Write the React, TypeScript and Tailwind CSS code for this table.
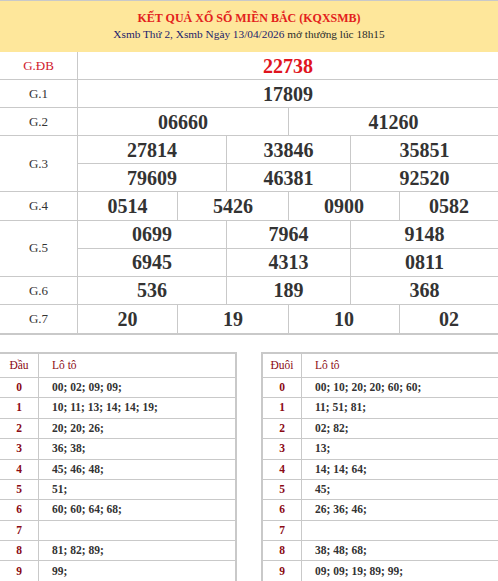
import React from "react";

const serif = { fontFamily: '"Liberation Serif", "Times New Roman", serif' };

const B = "border-[#c9c9c9]";

function Num({ v, red }: { v: string; red?: boolean }) {
  return (
    <span className={`text-[20px] font-bold leading-none ${red ? "text-[#e0141e]" : "text-[#333333]"}`}>{v}</span>
  );
}

function Cells({ vals, widths, red, last }: { vals: string[]; widths: string[]; red?: boolean; last?: boolean }) {
  return (
    <div className={`flex h-[28.1px] ${last ? "" : `border-b ${B}`}`}>
      {vals.map((v, i) => (
        <div
          key={i}
          className={`${widths[i]} ${i < vals.length - 1 ? `border-r ${B}` : ""} flex items-center justify-center`}
        >
          <Num v={v} red={red} />
        </div>
      ))}
    </div>
  );
}

const W1 = ["flex-1"];
const W2 = ["w-[211px]", "flex-1"];
const W3 = ["w-[149px]", "w-[124px]", "flex-1"];
const W4 = ["w-[100px]", "w-[111px]", "w-[111px]", "flex-1"];

function Row({ label, rows, widths, red, last }: { label: string; rows: string[][]; widths: string[]; red?: boolean; last?: boolean }) {
  return (
    <div className="flex">
      <div
        className={`w-[78px] shrink-0 border-r ${last ? "" : "border-b"} ${B} flex items-center justify-center text-[13px] ${red ? "text-[#d0202e]" : "text-[#333333]"}`}
      >
        {label}
      </div>
      <div className="flex-1 flex flex-col">
        {rows.map((r, i) => (
          <Cells key={i} vals={r} widths={widths} red={red} last={last && i === rows.length - 1} />
        ))}
      </div>
    </div>
  );
}

function LotoTable({ head, data, className }: { head: string; data: string[]; className: string }) {
  return (
    <div className={`w-[237px] border-t-2 ${B} ${className}`}>
      <div className={`flex h-[24px] border-b ${B}`}>
        <div className={`w-[39px] border-r ${B} flex items-center justify-center text-[11.5px] text-[#8b0a14]`}>{head}</div>
        <div className="flex-1 flex items-center pl-[13px] text-[11.5px] text-[#8b0a14]">Lô tô</div>
      </div>
      {data.map((d, i) => (
        <div key={i} className={`flex h-[20.4px] border-b ${B}`}>
          <div className={`w-[39px] border-r ${B} flex items-center justify-center text-[11.5px] font-bold text-[#8b0a14]`}>{i}</div>
          <div className="flex-1 flex items-center pl-[13px] text-[11.5px] font-bold text-[#333333]">{d}</div>
        </div>
      ))}
    </div>
  );
}

export default function App() {
  const dau = [
    "00; 02; 09; 09;",
    "10; 11; 13; 14; 14; 19;",
    "20; 20; 26;",
    "36; 38;",
    "45; 46; 48;",
    "51;",
    "60; 60; 64; 68;",
    "",
    "81; 82; 89;",
    "99;",
  ];
  const duoi = [
    "00; 10; 20; 20; 60; 60;",
    "11; 51; 81;",
    "02; 82;",
    "13;",
    "14; 14; 64;",
    "45;",
    "26; 36; 46;",
    "",
    "38; 48; 68;",
    "09; 09; 19; 89; 99;",
  ];
  return (
    <div className="w-[498px] h-[581px] overflow-hidden bg-white" style={serif}>
      <div className={`border-t ${B} bg-[#fee79b] h-[52px] flex flex-col items-center pt-[9px]`}>
        <div className="text-[12px] font-bold text-[#e3211b] leading-[16px]">KẾT QUẢ XỔ SỐ MIỀN BẮC (KQXSMB)</div>
        <div className="text-[11.3px] leading-[17px] text-[#1c1c6b]">
          Xsmb Thứ 2, Xsmb Ngày 13/04/2026 <span className="text-[#2b2b2b]">mở thưởng lúc 18h15</span>
        </div>
      </div>
      <div className={`border-b-2 ${B}`}>
        <Row label="G.ĐB" rows={[["22738"]]} widths={W1} red />
        <Row label="G.1" rows={[["17809"]]} widths={W1} />
        <Row label="G.2" rows={[["06660", "41260"]]} widths={W2} />
        <Row label="G.3" rows={[["27814", "33846", "35851"], ["79609", "46381", "92520"]]} widths={W3} />
        <Row label="G.4" rows={[["0514", "5426", "0900", "0582"]]} widths={W4} />
        <Row label="G.5" rows={[["0699", "7964", "9148"], ["6945", "4313", "0811"]]} widths={W3} />
        <Row label="G.6" rows={[["536", "189", "368"]]} widths={W3} />
        <Row label="G.7" rows={[["20", "19", "10", "02"]]} widths={W4} last />
      </div>
      <div className="flex mt-[17px]">
        <LotoTable head="Đầu" data={dau} className="border-r-2" />
        <div className="w-[24px]" />
        <LotoTable head="Đuôi" data={duoi} className="border-l-2" />
      </div>
    </div>
  );
}
